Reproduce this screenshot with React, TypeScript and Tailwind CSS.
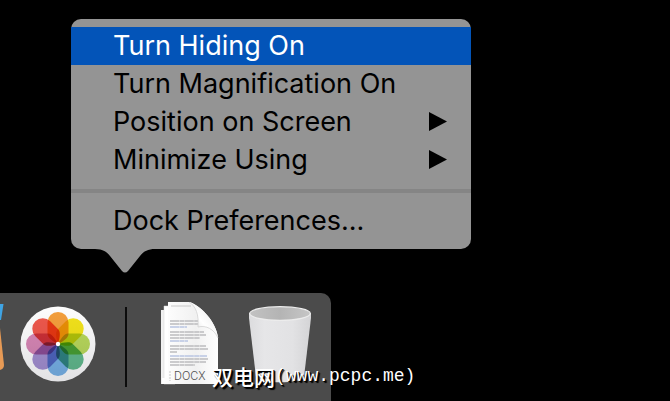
import React from "react";

type Item = { label: string; active?: boolean; submenu?: boolean };

const items: Item[] = [
  { label: "Turn Hiding On", active: true },
  { label: "Turn Magnification On" },
  { label: "Position on Screen", submenu: true },
  { label: "Minimize Using", submenu: true },
];

function MenuItem({ label, active, submenu }: Item) {
  return (
    <button
      type="button"
      role="menuitem"
      aria-haspopup={submenu ? "menu" : undefined}
      className={
        "flex h-[38px] w-full items-center justify-between pr-6 pl-[42px] text-left text-[27px] leading-[38px] whitespace-nowrap " +
        (active ? "bg-[#0354b8] text-white" : "text-black")
      }
    >
      <span>{label}</span>
      {submenu && (
        <svg width="18" height="20" viewBox="0 0 18 20" aria-hidden="true">
          <path d="M0 0 L18 9.5 L0 19 Z" fill="#000" />
        </svg>
      )}
    </button>
  );
}

const petals = [
  { angle: 0, color: "#f6a03c" },
  { angle: 45, color: "#f4e41a" },
  { angle: 90, color: "#b9d95c" },
  { angle: 135, color: "#62ba8e" },
  { angle: 180, color: "#78b3e8" },
  { angle: 225, color: "#a490d2" },
  { angle: 270, color: "#d887b6" },
  { angle: 315, color: "#f0584c" },
];

function PhotosIcon() {
  return (
    <svg width="76" height="76" viewBox="-38 -38 76 76" className="isolate" role="img" aria-label="Photos">
      <defs>
        <linearGradient id="disc" x1="0" y1="0" x2="0" y2="1">
          <stop offset="0" stopColor="#fdfdfd" />
          <stop offset="1" stopColor="#e2e2e4" />
        </linearGradient>
      </defs>
      <circle r="37.5" fill="url(#disc)" />
      {petals.map((p) => (
        <path
          key={p.angle}
          d="M-10.5 -21.5 A10.5 10.5 0 0 1 10.5 -21.5 V-10 C10.5 -6 4 -2 0 0 C-4 -2 -10.5 -6 -10.5 -10 Z"
          fill={p.color}
          transform={`rotate(${p.angle})`}
          className="mix-blend-multiply"
        />
      ))}
      <circle r="2.2" fill="#fff" />
    </svg>
  );
}

const textLines = [
  [19, 28], [22, 28], [25, 17], [30, 34], [33, 36], [36, 30], [39, 18], [44, 36],
  [47, 38], [50, 7], [54, 37], [57, 38], [60, 36], [63, 25],
];

function DocumentsIcon() {
  return (
    <svg width="58" height="84" viewBox="0 0 58 84" role="img" aria-label="Documents">
      <defs>
        <linearGradient id="curl" x1="0" y1="1" x2="1" y2="0">
          <stop offset="0" stopColor="#d2d2d2" />
          <stop offset="0.45" stopColor="#ffffff" />
          <stop offset="1" stopColor="#e4e4e4" />
        </linearGradient>
        <linearGradient id="sheet" x1="0" y1="0" x2="1" y2="0">
          <stop offset="0" stopColor="#ffffff" />
          <stop offset="0.6" stopColor="#f1f1f1" />
          <stop offset="1" stopColor="#ffffff" />
        </linearGradient>
      </defs>
      <path d="M0 8 H12 V82 H0 Z" fill="#f0f0f0" />
      <path d="M3 4 H14 V82 H3 Z" fill="#fff" stroke="#d4d4d4" strokeWidth="0.5" />
      <path d="M7 0 H28 C38 2 56 20 57 36 V82 H1 V76 H7 Z" fill="url(#sheet)" />
      <path d="M10 4 H30" stroke="#c8c8c8" strokeWidth="1" />
      {textLines.map(([y, w], i) => (
        <path
          key={y}
          d={`M9 ${y} h${w}`}
          stroke={i % 4 === 2 ? "#b9c5e2" : "#bcbcbe"}
          strokeWidth="1.5"
          strokeDasharray="9 0.4 5 0.4"
        />
      ))}
      <path d="M28 0 C35 4 38 13 37 25 C45 23 53 27 57 36 C56 20 38 2 28 0 Z" fill="url(#curl)" />
      <path d="M28 0 C35 4 38 13 37 25 C45 23 53 27 57 36" fill="none" stroke="#d2d2d2" strokeWidth="0.8" />
      <path d="M9 69 V79" stroke="#c9c9c9" strokeWidth="1" strokeDasharray="2 1" />
      <text x="13" y="78" fontSize="11" fontWeight="300" fill="#505050" fontFamily="Inter, sans-serif">
        DOCX
      </text>
    </svg>
  );
}

function TrashIcon() {
  return (
    <svg width="62" height="78" viewBox="0 0 62 78" role="img" aria-label="Trash">
      <defs>
        <linearGradient id="bin" x1="0" y1="0" x2="1" y2="0">
          <stop offset="0" stopColor="#dcdcde" />
          <stop offset="0.25" stopColor="#e6e6e8" />
          <stop offset="0.7" stopColor="#e2e2e4" />
          <stop offset="1" stopColor="#d4d4d6" />
        </linearGradient>
        <linearGradient id="inside" x1="0" y1="0" x2="1" y2="0">
          <stop offset="0" stopColor="#c2c2c2" />
          <stop offset="0.5" stopColor="#b4b4b4" />
          <stop offset="1" stopColor="#c6c6c6" />
        </linearGradient>
      </defs>
      <path d="M0 7 L0 12 L7 71 C9 78 53 78 55 71 L62 12 L62 7 Z" fill="url(#bin)" />
      <ellipse cx="31" cy="7.5" rx="30.3" ry="6.8" fill="url(#inside)" stroke="#ececec" strokeWidth="1.2" />
    </svg>
  );
}

function CroppedAppIcon() {
  return (
    <svg width="5" height="68" viewBox="0 0 5 68" aria-hidden="true">
      <path d="M0 0 H3.5 L1 16 H0 Z" fill="#3fa4e4" />
      <path d="M0 24 L4 61 Q4 65 0 66 Z" fill="#e79a55" />
    </svg>
  );
}

export default function App() {
  return (
    <main className="relative flex min-h-screen flex-col overflow-hidden bg-black pt-[19px] font-[Inter,'Liberation_Sans',sans-serif]">
      <div className="ml-[71px] w-[400px]">
        <div role="menu" aria-label="Dock" className="rounded-[10px] bg-[#949494] pt-2 pb-[9px]">
          {items.map((item) => (
            <MenuItem key={item.label} {...item} />
          ))}
          <hr className="mt-[10px] mb-[9px] h-1 border-0 bg-[#858585]" />
          <MenuItem label="Dock Preferences..." />
        </div>
        <svg width="60" height="24" viewBox="0 0 60 24" className="ml-6 block" aria-hidden="true">
          <path d="M0 0 C8 0 12 3 15 7 L27 22 Q30 25 33 22 L45 7 C49 2 53 0 60 0 Z" fill="#949494" />
        </svg>
      </div>

      <nav aria-label="Dock" className="mt-5 flex w-[331px] grow items-start rounded-tr-[10px] bg-[#4b4b4b] pb-3">
        <div className="w-5 pt-[11px]">
          <CroppedAppIcon />
        </div>
        <div className="pt-[13px]">
          <PhotosIcon />
        </div>
        <div className="mt-[14px] ml-[29px] h-20 w-0.5 bg-[#0c0c0c]" />
        <div className="ml-[34px] pt-[9px]">
          <DocumentsIcon />
        </div>
        <div className="ml-[30px] pt-[13px]">
          <TrashIcon />
        </div>
      </nav>

      <p className="absolute bottom-2.5 left-[212px] flex items-center leading-[30px] whitespace-nowrap text-white [text-shadow:1px_1px_0_#000,2px_2px_1px_#000]">
        <span className="font-['Noto_Sans_CJK_SC',sans-serif] text-[21px] font-medium">双电网</span>
        <span className="font-['Liberation_Mono',monospace] text-[18px]">(www.pcpc.me)</span>
      </p>
    </main>
  );
}
